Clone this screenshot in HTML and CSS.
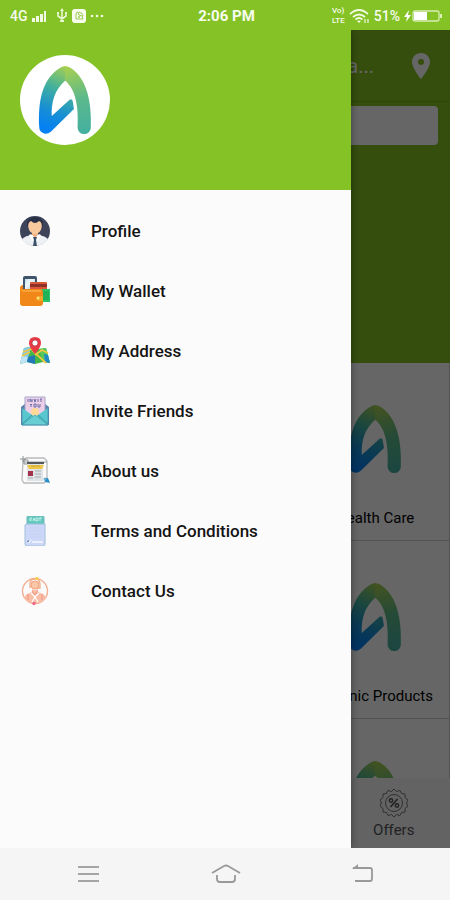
FILE: index.html
```html
<!DOCTYPE html>
<html lang="en">

<head>
    <meta charset="UTF-8">
    <meta name="viewport" content="width=device-width, initial-scale=1.0">
    <title>Menu</title>
    <link rel="stylesheet" href="styles.css">
</head>

<body>
    <!-- shared logo shape -->
    <svg class="defs" aria-hidden="true">
        <defs>
            <linearGradient id="logoFill" gradientUnits="userSpaceOnUse" x1="145" y1="270" x2="225" y2="88">
                <stop offset="0" stop-color="#0580f5" />
                <stop offset="0.28" stop-color="#188fd3" />
                <stop offset="0.62" stop-color="#42b09d" />
                <stop offset="1" stop-color="#a9d04f" />
            </linearGradient>
            <linearGradient id="legFill" gradientUnits="userSpaceOnUse" x1="250" y1="280" x2="200" y2="80">
                <stop offset="0" stop-color="#45b0a0" />
                <stop offset="0.5" stop-color="#5cb98b" />
                <stop offset="1" stop-color="#a9d04f" />
            </linearGradient>
            <symbol id="logo" viewBox="60 45 272 272">
                <path fill="url(#logoFill)" d="M118 262C115 190 124 122 178 86Q187 79 197 78V122C164 150 154 190 156 229L209 181Q218 174 220 188L223 208L154 276Q141 287 128 280Q118 275 118 262Z" />
                <path fill="url(#legFill)" d="M196 78Q206 78 216 86C262 118 277 188 274 265A20 19 0 0 1 234 265C237 205 230 150 196 122Z" />
            </symbol>
        </defs>
    </svg>

    <header class="status-bar">
        <div class="status-left">
            <span>4G</span>
            <svg width="15" height="14" viewBox="0 0 15 14" fill="#f2fae5">
                <path d="M0 9h3v4H0zM4 7h3v6H4zM8 5h3v8H8zM12 2h2v11h-2z" />
            </svg>
            <svg class="usb" width="12" height="16" viewBox="0 0 12 16" fill="none" stroke="#e9f6d2" stroke-width="1.6">
                <path d="M6 2v10M2 6v2l4 3 4-3V6" />
                <path d="M6 0l2 3H4zM4 12h4v2H4zM1 4h2v2H1zM9 4h2v2H9z" fill="#e9f6d2" stroke="none" />
            </svg>
            <svg width="14" height="14" viewBox="0 0 14 14">
                <rect width="14" height="14" rx="3" fill="#f7fcee" />
                <path d="M4 10V5q0-2 2-2l1 3q4 0 4 4zM7 3q4 1 4 4" fill="none" stroke="#9ccc52" />
                <circle cx="7" cy="8" r="1" fill="#9ccc52" />
            </svg>
            <svg width="14" height="4" viewBox="0 0 14 4" fill="#f2fae5">
                <circle cx="2" cy="2" r="1.3" />
                <circle cx="7" cy="2" r="1.3" />
                <circle cx="12" cy="2" r="1.3" />
            </svg>
        </div>
        <div class="clock">2:06 PM</div>
        <div class="status-right">
            <div class="volte">
                <span>Vo)</span>
                <span>LTE</span>
            </div>
            <svg width="21" height="15" viewBox="0 0 21 15" fill="none" stroke="#f2fae5" stroke-width="1.7">
                <path d="M1 5q9-8 18 0M4 8q6-5 12 0M6.5 10.5q3.500-3 7 0" />
                <path d="M8 12q2-1 4 0l-2 2z" fill="#f2fae5" stroke="none" />
                <path d="M16 10v4M19 10v4" stroke-width="1.2" />
            </svg>
            <span class="percent">51%</span>
            <svg width="39" height="14" viewBox="0 0 39 14">
                <path d="M5 1L0 8h3l-1 5 5-7H4z" fill="#fff" />
                <rect x="9" y="2" width="26" height="10" rx="2" fill="none" stroke="#d8eeb5" stroke-width="1.3" />
                <rect x="10" y="3" width="13" height="8" fill="#fff" />
                <path d="M37 5v4" stroke="#d8eeb5" stroke-width="2" />
            </svg>
        </div>
    </header>

    <div class="app">
        <div class="home">
            <div class="app-bar">
                <span class="app-title">a...</span>
                <button class="icon-btn" aria-label="Location">
                    <svg width="20" height="26" viewBox="0 0 20 26">
                        <path fill="#fff" fill-rule="evenodd" d="M10 0C4.500 0 1 4 1 9c0 6 9 17 9 17s9-11 9-17c0-5-3.500-9-9-9zm0 6a3 3 0 1 1 0 6 3 3 0 0 1 0-6z" />
                    </svg>
                </button>
            </div>
            <div class="banner">
                <input class="search" type="text" aria-label="Search">
            </div>
            <div class="categories">
                <a class="category" href="#">
                    <svg class="logo"><use href="#logo" /></svg>
                    <span>Health Care</span>
                </a>
                <a class="category" href="#">
                    <svg class="logo"><use href="#logo" /></svg>
                    <span>Organic Products</span>
                </a>
                <a class="category" href="#" aria-label="Category">
                    <svg class="logo"><use href="#logo" /></svg>
                </a>
            </div>
            <nav class="tabs">
                <a class="tab" href="#">
                    <svg width="28" height="30" viewBox="0 0 28 30" fill="none" stroke="#777">
                        <path d="M14 1l2.500 2.500L20 2.500l1.500 3 3.500.5v3.500l3 2.500-1.500 3 1.500 3-3 2.500V24l-3.500.5-1.500 3-3.500-1L14 29l-2.500-2.500-3.500 1-1.500-3L3 24v-3.500L0 18l1.500-3L0 12l3-2.500V6l3.500-.5 1.500-3 3.500 1z" />
                        <circle cx="14" cy="15" r="8.5" />
                        <path stroke="#555" stroke-width="1.6" d="M17.500 11l-7 8" />
                        <circle cx="11" cy="12.5" r="1.7" stroke="#555" stroke-width="1.4" />
                        <circle cx="17" cy="17.5" r="1.7" stroke="#555" stroke-width="1.4" />
                    </svg>
                    <span>Offers</span>
                </a>
            </nav>
        </div>

        <div class="scrim"></div>

        <aside class="drawer">
            <div class="drawer-header">
                <div class="avatar">
                    <svg class="logo"><use href="#logo" /></svg>
                </div>
            </div>
            <nav class="menu">
                <a class="menu-item" href="#">
                    <svg class="menu-icon" viewBox="0 0 30 30">
                        <circle cx="15" cy="15" r="15" fill="#3d4459" />
                        <path d="M2 23q3-3 9-4h8q6 1 9 4-4 7-13 7T2 23z" fill="#edf1f4" />
                        <path d="M12 14h6v5l-3 3-3-3z" fill="#edb183" />
                        <path d="M8 7q0 8 4 10 3 2 6 0 4-2 4-10l-2-3H10z" fill="#f8c99d" />
                        <path d="M7 9q0-8 8-8t8 8l-1 2q0-5-3-6-2 2-4 2T11 5q-3 1-3 6z" fill="#293046" />
                        <path d="M11 18l4 4-3 3-3-6zM19 18l-4 4 3 3 3-6z" fill="#fff" />
                        <path d="M13 21h4l-1 3 1 6h-4l1-6z" fill="#3f5269" />
                    </svg>
                    <span>Profile</span>
                </a>
                <a class="menu-item" href="#">
                    <svg class="menu-icon" viewBox="0 0 30 30">
                        <rect x="3" y="0" width="14" height="17" rx="2" fill="#40546b" />
                        <path d="M5 3h10v13H5z" fill="#cae5ee" />
                        <path d="M8 3h7L6 14H5V8z" fill="#e7f3f7" />
                        <rect x="10" y="6" width="17" height="13" rx="1" fill="#d95737" />
                        <path d="M10 8h17v3H10z" fill="#8d3027" />
                        <path d="M10 13h20v13H18z" fill="#28c468" />
                        <path d="M22 15h7v9h-7z" fill="#20b159" />
                        <path d="M0 11q1-2 3-2v4h17q3 0 3 3v11q0 3-3 3H3q-3 0-3-3z" fill="#f18718" />
                        <path d="M0 12q1 3 4 2h17v2H3q-2 0-3-4z" fill="#f9a237" />
                        <path d="M18 20h5v5h-5q-3-2 0-5z" fill="#f4a526" />
                        <circle cx="18" cy="22" r="1.5" fill="#ffe379" />
                    </svg>
                    <span>My Wallet</span>
                </a>
                <a class="menu-item" href="#">
                    <svg class="menu-icon" viewBox="0 0 30 30">
                        <path d="M4 12l7-1 8 2 7-1 4 15-7-1-8 2-8-2-7 2z" fill="#43b649" />
                        <path d="M4 12l7-1-4 15-7 2z" fill="#83c7ec" />
                        <path d="M2 20l6 1-1 5-7 2z" fill="#bfe4f5" />
                        <path d="M8 21l7-2v9l-8-2z" fill="#2378b8" />
                        <path d="M19 13l7-1 4 15-7-1z" fill="#58c85b" />
                        <path d="M24 18l4 1 2 8-5-1z" fill="#228acb" />
                        <path d="M3 16l8-3 5 5 10 9M15 19l7-5 6 3M2 20l8-4" fill="none" stroke="#f2c842" stroke-width="1.7" />
                        <path d="M15 1q-6 0-6 6 0 4 6 11 6-7 6-11 0-6-6-6z" fill="#e93945" />
                        <circle cx="15" cy="7" r="3.2" fill="#fff" stroke="#bd2639" />
                    </svg>
                    <span>My Address</span>
                </a>
                <a class="menu-item" href="#">
                    <svg class="menu-icon" viewBox="0 0 30 30">
                        <path d="M1 11l5-4h18l5 4v18H1z" fill="#5d82aa" />
                        <path d="M5 1h20v16l-10 7-10-7z" fill="#edcee6" stroke="#a5a7ce" />
                        <path d="M8 3v3M10 6V3l2 3V3M14 3l1 3 1-3M18 3v3M20 3h2M21 3v3M10 8l1 1 1-1M11 9v2M14 8h2v3h-2zM18 8v3h2V8" fill="none" stroke="#6871ac" />
                        <circle cx="15" cy="16" r="4" fill="#ffd998" />
                        <path d="M2 12l13 9 13-9v17H2z" fill="#59c7ce" />
                        <path d="M2 28l10-9M28 28l-10-9" stroke="#3996a5" />
                        <path d="M2 29l13-10 13 10z" fill="#69ced4" stroke="#48a6b3" stroke-width=".8" />
                        <path d="M2 12v17h26V12" fill="none" stroke="#4b91ad" stroke-width=".8" />
                    </svg>
                    <span>Invite Friends</span>
                </a>
                <a class="menu-item" href="#">
                    <svg class="menu-icon" viewBox="0 0 30 30">
                        <path d="M3 5l3-3h18l3 3v19l-3 3H4l-2-3z" fill="#fafafa" stroke="#b9bbbd" stroke-width="1.3" />
                        <path d="M3 6h24" stroke="#9ba0a3" />
                        <path d="M3 0v6M0 3h6M4 4h4v4H4z" fill="none" stroke="#8c9092" />
                        <path d="M7 7h16v18H7z" fill="#e0e3e5" />
                        <path d="M7 6h17v2H7z" fill="#56595c" />
                        <path d="M7 9h17l-2 4H9z" fill="#edc745" />
                        <path d="M11 10h9" stroke="#c9a63c" />
                        <path d="M8 15h5v5H8z" fill="#a4344c" />
                        <path d="M15 15h6M15 18h6M15 21h6M8 22h5" stroke="#a8afb4" />
                        <path d="M24 22l4 0 2 5-5-1z" fill="#2c8fc9" />
                        <circle cx="25" cy="23" r="1.5" fill="#6aaed3" />
                    </svg>
                    <span>About us</span>
                </a>
                <a class="menu-item" href="#">
                    <svg class="menu-icon" viewBox="0 0 30 30">
                        <rect x="7" y="0" width="17" height="12" rx="1" fill="#62c7bd" stroke="#72b6be" />
                        <path d="M10 5V2h2M10 4h2M13 5l1-3 1 3M16 2h2v3h-2zM20 2v3M19 2h3" fill="none" stroke="#c1f0e9" />
                        <path d="M6 8h19v20q0 2-2 2H7q-2 0-2-2V9z" fill="#cdd8f8" stroke="#a0bddb" />
                        <path d="M9 12h13M9 15h13M9 18h13M9 21h13" stroke="#c3cdf0" stroke-width=".8" />
                        <path d="M8 25l1 1 2-2M12 26h11" fill="none" stroke="#f6f8ff" stroke-width="1.5" />
                        <path d="M7 25l1 1 1-2" fill="none" stroke="#707faa" />
                    </svg>
                    <span>Terms and Conditions</span>
                </a>
                <a class="menu-item" href="#">
                    <svg class="menu-icon" viewBox="0 0 30 30">
                        <circle cx="15" cy="15" r="12.5" fill="none" stroke="#f4b095" stroke-width="1.4" />
                        <circle cx="15" cy="9" r="4" fill="#f9c6a7" stroke="#f0a181" />
                        <path d="M10 12V8q0-5 5-5t5 5v4h-2" fill="none" stroke="#f3ad83" stroke-width="1.3" />
                        <path d="M12 13q3 2 6 0v3l5 2q3 2 2 5-4 4-10 4T5 23q-1-3 2-5l5-2z" fill="#f9bea8" />
                        <path d="M11 17l4 4 4-4M15 21l-3 5M15 21l3 5" fill="none" stroke="#fff" stroke-width="1.2" />
                        <path d="M8 18v6M22 18v6M12 15l3 4 3-4" fill="none" stroke="#ed9481" />
                        <circle cx="17" cy="2.5" r="1.7" fill="#f8cf5b" />
                        <circle cx="14" cy="27.5" r="1.7" fill="#ed688c" />
                    </svg>
                    <span>Contact Us</span>
                </a>
            </nav>
        </aside>
    </div>

    <footer class="system-nav">
        <button class="icon-btn" aria-label="Recent apps">
            <svg width="30" height="22" viewBox="0 0 30 22" stroke="#a5a5a5" stroke-width="2">
                <path d="M5 4h21M5 11h21M5 18h21" />
            </svg>
        </button>
        <button class="icon-btn" aria-label="Home">
            <svg width="30" height="22" viewBox="0 0 30 22" fill="none" stroke="#999" stroke-width="1.8">
                <path d="M1 10l12-7q2-1 4 0l12 7M6 12v4q0 3 3 3h12q3 0 3-3v-4" />
            </svg>
        </button>
        <button class="icon-btn" aria-label="Back">
            <svg width="30" height="22" viewBox="0 0 30 22" fill="none" stroke="#999" stroke-width="1.8">
                <path d="M5 5h17q2 0 2 2v9q0 2-2 2H7" />
                <path d="M4 6l6-5v5z" fill="#999" stroke="none" />
            </svg>
        </button>
    </footer>
</body>

</html>
```
FILE: styles.css
```css
* {
    box-sizing: border-box;
}

body {
    font-family: Roboto, sans-serif;
    margin: 0;
    height: 100vh;
    display: flex;
    flex-direction: column;
    background-color: #f5f5f5;
    overflow: hidden;
}

a {
    color: inherit;
    text-decoration: none;
}

svg {
    display: block;
    flex-shrink: 0;
}

.defs {
    position: absolute;
    width: 0;
    height: 0;
}

.icon-btn {
    padding: 0;
    border: none;
    background: none;
    cursor: pointer;
}

.logo {
    width: 90px;
    height: 90px;
}

/* Status bar */
.status-bar {
    display: grid;
    grid-template-columns: 1fr auto 1fr;
    align-items: center;
    height: 30px;
    padding: 2px 7px 0 10px;
    background-color: #84c225;
    color: #f7fcee;
    font-size: 14px;
    font-weight: 500;
}

.status-left,
.status-right {
    display: flex;
    align-items: center;
    gap: 4px;
}

.usb {
    margin-left: 5px;
}

.status-right {
    justify-content: flex-end;
}

.clock {
    font-size: 15px;
    font-weight: 700;
}

.volte {
    display: flex;
    flex-direction: column;
    font-size: 8px;
    line-height: 10px;
}

/* Home page */
.app {
    position: relative;
    flex: 1;
    min-height: 0;
}

.home {
    display: flex;
    flex-direction: column;
    height: 100%;
    background-color: #fff;
}

.app-bar {
    display: flex;
    align-items: center;
    justify-content: flex-end;
    gap: 37px;
    height: 72px;
    padding: 0 19px;
    background-color: #84c225;
    border-bottom: 1px solid #75ad20;
    color: #fff;
    flex-shrink: 0;
}

.app-title {
    font-size: 20px;
}

.banner {
    height: 261px;
    padding: 4px 12px;
    background-color: #84c225;
    flex-shrink: 0;
}

.search {
    display: block;
    width: 100%;
    height: 39px;
    border: none;
    border-radius: 4px;
    background-color: #fff;
}

.categories {
    flex: 1;
    min-height: 0;
    overflow: hidden;
    display: flex;
    flex-direction: column;
    align-items: flex-end;
}

.category {
    display: flex;
    flex-direction: column;
    align-items: center;
    gap: 24px;
    width: 33%;
    height: 178px;
    padding-top: 31px;
    border-right: 1px solid #ccc;
    border-bottom: 1px solid #ccc;
    font-size: 15px;
    line-height: 20px;
    white-space: nowrap;
    flex-shrink: 0;
}

.tabs {
    display: flex;
    justify-content: flex-end;
    height: 70px;
    background-color: #f7f7f7;
    flex-shrink: 0;
}

.tab {
    display: flex;
    flex-direction: column;
    align-items: center;
    gap: 2px;
    width: 25%;
    padding-top: 10px;
    color: #555;
    font-size: 15px;
    line-height: 20px;
}

.scrim {
    position: absolute;
    inset: 0;
    background-color: rgba(0, 0, 0, 0.6);
}

/* Drawer */
.drawer {
    position: absolute;
    top: 0;
    bottom: 0;
    left: 0;
    width: 78%;
    background-color: #fbfbfb;
    box-shadow: 0 0 8px rgba(0, 0, 0, 0.4);
    clip-path: inset(0 -8px 0 0);
}

.drawer-header {
    height: 160px;
    padding: 25px 20px;
    background-color: #84c225;
}

.avatar {
    width: 90px;
    height: 90px;
    border-radius: 50%;
    background-color: #fff;
}

.menu {
    padding-top: 11px;
}

.menu-item {
    display: flex;
    align-items: center;
    gap: 41px;
    height: 60px;
    padding: 0 20px;
    color: #141414;
    font-size: 17px;
    font-weight: 500;
}

.menu-icon {
    width: 30px;
    height: 30px;
}

/* System navigation */
.system-nav {
    display: flex;
    align-items: center;
    justify-content: space-between;
    height: 52px;
    padding: 0 72px 0 73px;
    background-color: #f5f5f5;
    flex-shrink: 0;
}
```
